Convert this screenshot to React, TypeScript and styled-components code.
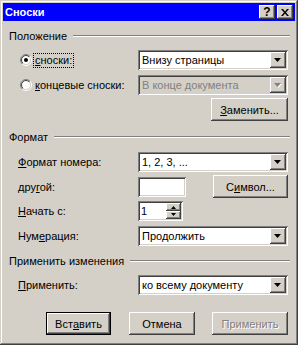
import React, { useId } from "react";
import styled, { createGlobalStyle, css } from "styled-components";

const Global = createGlobalStyle`
  html, body { margin: 0; padding: 0; background: #d4d0c8; }
  body { font-family: "Liberation Sans", Arial, sans-serif; font-size: 11px; color: #000; }
  * { box-sizing: border-box; }
`;

const raised = css`
  background: #d4d0c8;
  box-shadow: inset -1px -1px #404040, inset 1px 1px #ffffff, inset -2px -2px #808080, inset 2px 2px #d4d0c8;
`;

const sunken = css`
  box-shadow: inset 1px 1px #808080, inset -1px -1px #ffffff, inset 2px 2px #404040, inset -2px -2px #d4d0c8;
`;

const Window = styled.div`
  width: 298px;
  height: 345px;
  padding: 3px;
  background: #d4d0c8;
  box-shadow: inset -1px -1px #404040, inset 1px 1px #d4d0c8, inset -2px -2px #808080, inset 2px 2px #ffffff;
  display: flex;
  flex-direction: column;
`;

const TitleBar = styled.div`
  height: 18px;
  flex: none;
  background: #0000ff;
  display: flex;
  align-items: center;
  padding: 0 2px;
  color: #fff;
  font-weight: bold;
  font-size: 11px;
`;

const TitleText = styled.span`
  flex: 1;
  white-space: nowrap;
`;

const CaptionButton = styled.div<{ $ml: number }>`
  ${raised};
  width: 16px;
  height: 14px;
  margin-left: ${(p) => p.$ml}px;
  display: flex;
  align-items: center;
  justify-content: center;
  color: #000;
  font-size: 12px;
  font-weight: bold;
  line-height: 1;
`;

const Content = styled.div`
  padding: 0 5px 0 6px;
  display: flex;
  flex-direction: column;
`;

const GroupHeader = styled.div<{ $mt: number }>`
  margin-top: ${(p) => p.$mt}px;
  height: 16px;
  display: flex;
  align-items: center;
  gap: 6px;
  white-space: nowrap;
  &::after {
    content: "";
    flex: 1;
    height: 0;
    border-top: 1px solid #808080;
    border-bottom: 1px solid #ffffff;
  }
`;

const Row = styled.div<{ $mt: number; $h?: number; $pl?: number }>`
  margin-top: ${(p) => p.$mt}px;
  height: ${(p) => p.$h ?? 20}px;
  margin-right: 2px;
  padding-left: ${(p) => p.$pl ?? 9}px;
  display: flex;
  align-items: center;
`;

const Label = styled.div<{ $w: number }>`
  width: ${(p) => p.$w}px;
  flex: none;
  white-space: nowrap;
  display: flex;
  align-items: center;
`;

const Field = styled.div<{ $justify?: string }>`
  flex: 1;
  display: flex;
  align-items: center;
  justify-content: ${(p) => p.$justify ?? "flex-start"};
`;

const RadioText = styled.span<{ $focus?: boolean }>`
  margin-left: 2px;
  padding: 0 1px;
  line-height: 13px;
  outline: ${(p) => (p.$focus ? "1px dotted #000" : "none")};
`;

const U = styled.span`
  text-decoration: underline;
  text-underline-offset: 1px;
`;

const ComboBox = styled.div<{ $disabled?: boolean }>`
  ${sunken};
  width: 150px;
  height: 20px;
  padding: 2px;
  display: flex;
  background: ${(p) => (p.$disabled ? "#d4d0c8" : "#ffffff")};
  color: ${(p) => (p.$disabled ? "#808080" : "#000")};
`;

const ComboText = styled.div`
  flex: 1;
  padding-left: 2px;
  display: flex;
  align-items: center;
  white-space: nowrap;
  overflow: hidden;
`;

const DropButton = styled.div`
  ${raised};
  width: 16px;
  flex: none;
  display: flex;
  align-items: center;
  justify-content: center;
`;

const TextBox = styled.div<{ $w: number }>`
  ${sunken};
  width: ${(p) => p.$w}px;
  height: 20px;
  background: #fff;
  padding: 2px;
  display: flex;
`;

const SpinText = styled.div`
  flex: 1;
  padding-left: 1px;
  display: flex;
  align-items: center;
`;

const SpinButtons = styled.div`
  width: 15px;
  flex: none;
  display: flex;
  flex-direction: column;
`;

const SpinButton = styled.div`
  ${raised};
  flex: 1;
  display: flex;
  align-items: center;
  justify-content: center;
`;

const Button = styled.div<{ $w: number; $default?: boolean; $disabled?: boolean }>`
  width: ${(p) => p.$w}px;
  height: 23px;
  flex: none;
  display: flex;
  align-items: center;
  justify-content: center;
  white-space: nowrap;
  background: #d4d0c8;
  color: ${(p) => (p.$disabled ? "#808080" : "#000")};
  text-shadow: ${(p) => (p.$disabled ? "1px 1px 0 #ffffff" : "none")};
  box-shadow: ${(p) =>
    p.$default
      ? "inset 0 0 0 1px #000, inset -2px -2px #404040, inset 2px 2px #ffffff, inset -3px -3px #808080"
      : "inset -1px -1px #404040, inset 1px 1px #ffffff, inset -2px -2px #808080, inset 2px 2px #d4d0c8"};
`;

const ButtonBar = styled.div`
  margin-top: 17px;
  margin-right: 2px;
  display: flex;
  justify-content: flex-end;
`;

const Gap = styled.div<{ $w: number }>`
  width: ${(p) => p.$w}px;
  flex: none;
`;

function Arrow({ disabled, small }: { disabled?: boolean; small?: boolean; up?: boolean }) {
  const w = small ? 5 : 7;
  const h = small ? 3 : 4;
  return (
    <svg width={w + 1} height={h + 1} viewBox={`0 0 ${w + 1} ${h + 1}`}>
      {disabled && <polygon points={`1,1 ${w + 1},1 ${w / 2 + 1},${h + 1}`} fill="#ffffff" />}
      <polygon points={`0,0 ${w},0 ${w / 2},${h}`} fill={disabled ? "#808080" : "#000"} />
    </svg>
  );
}

function UpArrow() {
  return (
    <svg width="5" height="3" viewBox="0 0 5 3">
      <polygon points="0,3 5,3 2.5,0" fill="#000" />
    </svg>
  );
}

function Radio({ checked }: { checked?: boolean }) {
  const id = useId().replace(/:/g, "");
  return (
    <svg width="12" height="12" viewBox="0 0 12 12" style={{ flex: "none" }}>
      <defs>
        <linearGradient id={`o${id}`} x1="0" y1="0" x2="1" y2="1">
          <stop offset="0.5" stopColor="#808080" />
          <stop offset="0.5" stopColor="#ffffff" />
        </linearGradient>
        <linearGradient id={`i${id}`} x1="0" y1="0" x2="1" y2="1">
          <stop offset="0.5" stopColor="#404040" />
          <stop offset="0.5" stopColor="#d4d0c8" />
        </linearGradient>
      </defs>
      <circle cx="6" cy="6" r="5.5" fill="none" stroke={`url(#o${id})`} strokeWidth="1" />
      <circle cx="6" cy="6" r="4.5" fill="#ffffff" stroke={`url(#i${id})`} strokeWidth="1" />
      {checked && <circle cx="6" cy="6" r="2" fill="#000" />}
    </svg>
  );
}

function Combo({ value, disabled }: { value: string; disabled?: boolean }) {
  return (
    <ComboBox $disabled={disabled}>
      <ComboText>{value}</ComboText>
      <DropButton>
        <Arrow disabled={disabled} />
      </DropButton>
    </ComboBox>
  );
}

export default function App() {
  return (
    <>
      <Global />
      <Window>
        <TitleBar>
          <TitleText>Сноски</TitleText>
          <CaptionButton $ml={0}>?</CaptionButton>
          <CaptionButton $ml={2}>
            <svg width="8" height="7" viewBox="0 0 8 7">
              <path d="M0 0h2l2 2.4L6 0h2L5 3.5 8 7H6L4 4.6 2 7H0l3-3.5z" fill="#000" />
            </svg>
          </CaptionButton>
        </TitleBar>
        <Content>
          <GroupHeader $mt={7}>Положение</GroupHeader>
          <Row $mt={6} $pl={11}>
            <Label $w={118}>
              <Radio checked />
              <RadioText $focus>
                <U>с</U>носки:
              </RadioText>
            </Label>
            <Field>
              <Combo value="Внизу страницы" />
            </Field>
          </Row>
          <Row $mt={5} $pl={11}>
            <Label $w={118}>
              <Radio />
              <RadioText>
                <U>к</U>онцевые сноски:
              </RadioText>
            </Label>
            <Field>
              <Combo value="В конце документа" disabled />
            </Field>
          </Row>
          <Row $mt={3} $h={23}>
            <Field $justify="flex-end">
              <Button $w={77}>
                <U>З</U>аменить...
              </Button>
            </Field>
          </Row>

          <GroupHeader $mt={8}>Формат</GroupHeader>
          <Row $mt={7}>
            <Label $w={120}>
              <span>
                <U>Ф</U>ормат номера:
              </span>
            </Label>
            <Field>
              <Combo value="1, 2, 3, ..." />
            </Field>
          </Row>
          <Row $mt={3} $h={23}>
            <Label $w={120}>
              <span>
                дру<U>г</U>ой:
              </span>
            </Label>
            <Field $justify="space-between">
              <TextBox $w={48} />
              <Button $w={75}>
                С<U>и</U>мвол...
              </Button>
            </Field>
          </Row>
          <Row $mt={3}>
            <Label $w={120}>
              <span>
                <U>Н</U>ачать с:
              </span>
            </Label>
            <Field>
              <TextBox $w={45}>
                <SpinText>1</SpinText>
                <SpinButtons>
                  <SpinButton>
                    <UpArrow />
                  </SpinButton>
                  <SpinButton>
                    <Arrow small />
                  </SpinButton>
                </SpinButtons>
              </TextBox>
            </Field>
          </Row>
          <Row $mt={5}>
            <Label $w={120}>
              <span>
                Нум<U>е</U>рация:
              </span>
            </Label>
            <Field>
              <Combo value="Продолжить" />
            </Field>
          </Row>

          <GroupHeader $mt={7}>Применить изменения</GroupHeader>
          <Row $mt={6}>
            <Label $w={120}>
              <span>
                <U>П</U>рименить:
              </span>
            </Label>
            <Field>
              <Combo value="ко всему документу" />
            </Field>
          </Row>

          <ButtonBar>
            <Button $w={65} $default>
              Вст<U>а</U>вить
            </Button>
            <Gap $w={18} />
            <Button $w={66}>Отмена</Button>
            <Gap $w={17} />
            <Button $w={76} $disabled>
              Применить
            </Button>
          </ButtonBar>
        </Content>
      </Window>
    </>
  );
}
